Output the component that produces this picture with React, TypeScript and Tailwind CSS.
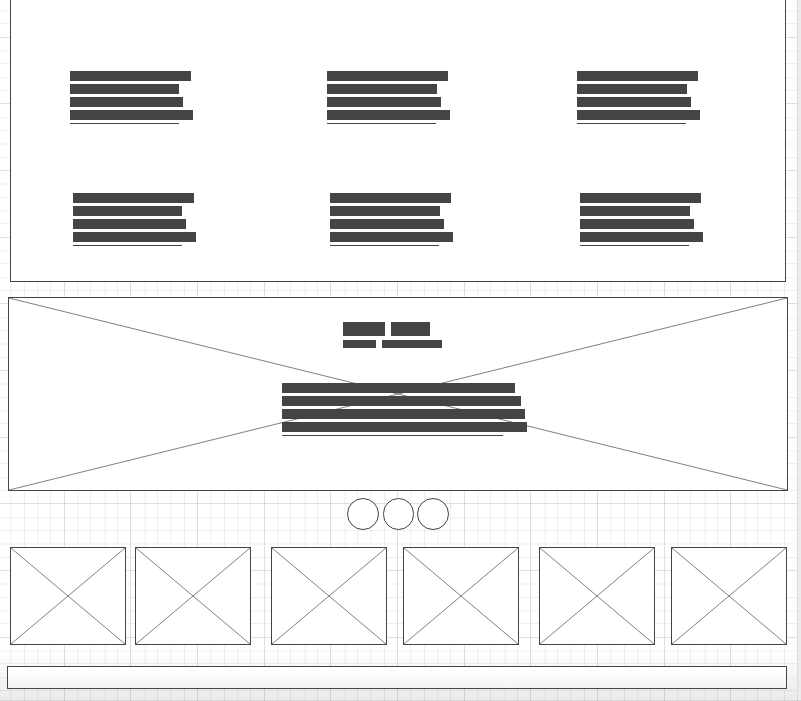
import React from "react";

const TILE = 200;
const STEPS = Array.from({ length: 15 }, (_, i) => i);

// Every fifth line is a major one; between them, soft wide lines alternate with thin ones.
function gridLine(step: number): { size: number; fill: string } {
  const inCell = step % 5;
  if (inCell === 0) return { size: 1, fill: "#e0e0e0" };
  return inCell % 2 === 1 ? { size: 2, fill: "#f8f8f8" } : { size: 1, fill: "#efefef" };
}

function GridPaper() {
  return (
    <svg className="absolute inset-0 h-full w-full" aria-hidden="true" shapeRendering="crispEdges">
      <defs>
        <pattern id="grid-rows" width={TILE} height={TILE} y={37} patternUnits="userSpaceOnUse">
          {STEPS.map((s) => (
            <rect key={s} y={Math.floor((s * TILE) / 15)} width={TILE} height={gridLine(s).size} fill={gridLine(s).fill} />
          ))}
        </pattern>
        <pattern id="grid-columns" width={TILE} height={TILE} x={197} patternUnits="userSpaceOnUse">
          {STEPS.map((s) => (
            <rect key={s} x={Math.round((s * TILE) / 15)} width={gridLine(s).size} height={TILE} fill={gridLine(s).fill} />
          ))}
        </pattern>
      </defs>
      <rect width="100%" height="100%" fill="url(#grid-rows)" />
      <rect width="100%" height="100%" fill="url(#grid-columns)" className="mix-blend-multiply" />
    </svg>
  );
}

function Cross() {
  return (
    <svg className="absolute inset-0 h-full w-full" aria-hidden="true" stroke="#808080" strokeWidth={1}>
      <line x1="0" y1="0" x2="100%" y2="100%" />
      <line x1="0" y1="100%" x2="100%" y2="0" />
    </svg>
  );
}

function Paragraph({ widths, className = "" }: { widths: string[]; className?: string }) {
  return (
    <div className={`flex flex-col gap-[3px] ${className}`}>
      {widths.map((w, i) => (
        <div key={i} className={`bg-[#444444] ${w} ${i === widths.length - 1 ? "h-px" : "h-2.5"}`} />
      ))}
    </div>
  );
}

const FIRST = ["w-[121px]", "w-[109px]", "w-[113px]", "w-[123px]", "w-[109px]"];
const OTHER = ["w-[121px]", "w-[110px]", "w-[114px]", "w-[123px]", "w-[109px]"];
const INTRO = ["w-[233px]", "w-[239px]", "w-[243px]", "w-[245px]", "w-[221px]"];

function FeatureRow({ className }: { className: string }) {
  return (
    <div className={`grid grid-cols-[257fr_250fr_205fr] ${className}`}>
      <Paragraph widths={FIRST} />
      <Paragraph widths={OTHER} />
      <Paragraph widths={OTHER} />
    </div>
  );
}

function Thumbnail() {
  return (
    <div className="relative h-[98px] w-[116px] border border-[#444444] bg-white">
      <Cross />
    </div>
  );
}

function ThumbnailPair({ gap }: { gap: string }) {
  return (
    <div className={`flex ${gap}`}>
      <Thumbnail />
      <Thumbnail />
    </div>
  );
}

export default function App() {
  return (
    <div className="relative flex min-h-screen bg-white">
      <GridPaper />
      <div className="pointer-events-none absolute inset-x-0 bottom-0 h-[50px] border-b border-black/15 bg-linear-to-b from-transparent to-black/8" />
      <main className="relative min-w-0 flex-1 pb-3">
        <section className="ml-[10px] mr-[11px] border border-t-0 border-[#444444] bg-white pb-[35px] pt-[71px]">
          <FeatureRow className="pl-[59px] pr-[3px]" />
          <FeatureRow className="mt-[69px] pl-[62px]" />
        </section>

        <section className="relative ml-2 mr-[9px] mt-[15px] border border-[#444444] bg-white">
          <Cross />
          <div className="relative flex flex-col items-center pb-[54px] pt-6">
            <div className="mr-[11px] flex w-[99px] flex-col gap-1">
              <div className="flex gap-1.5">
                <div className="h-3.5 w-[42px] bg-[#444444]" />
                <div className="h-3.5 w-[39px] bg-[#444444]" />
              </div>
              <div className="flex gap-1.5">
                <div className="h-2 w-[33px] bg-[#444444]" />
                <div className="h-2 w-[60px] bg-[#444444]" />
              </div>
            </div>
            <Paragraph widths={INTRO} className="ml-[13px] mt-[35px]" />
          </div>
        </section>

        <div className="ml-2 mr-[9px] mt-[7px] flex justify-center">
          <div className="size-8 rounded-full border border-[#444444] bg-white" />
          <div className="ml-1 mr-[3px] h-8 w-[31px] rounded-full border border-[#444444] bg-white" />
          <div className="size-8 rounded-full border border-[#444444] bg-white" />
        </div>

        <section className="mx-[10px] mt-[17px] flex justify-between">
          <ThumbnailPair gap="gap-[9px]" />
          <ThumbnailPair gap="gap-4" />
          <ThumbnailPair gap="gap-4" />
        </section>

        <footer className="ml-[7px] mr-[10px] mt-[21px] h-[23px] border border-[#444444] bg-linear-to-b from-white to-[#f4f4f4]" />
      </main>
      <div className="relative mb-px w-1 border-l border-[#dcdcdc] bg-[#ececec]" />
    </div>
  );
}
